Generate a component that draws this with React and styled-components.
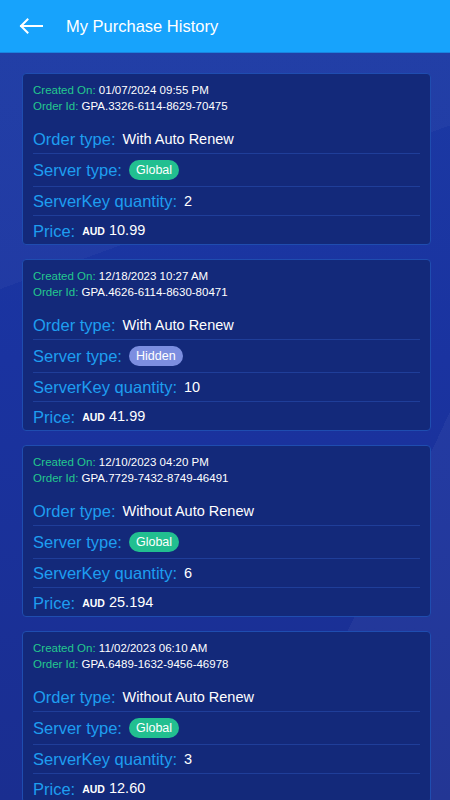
import styled, { createGlobalStyle } from 'styled-components'

const orders = [
  {
    createdOn: '01/07/2024 09:55 PM',
    orderId: 'GPA.3326-6114-8629-70475',
    orderType: 'With Auto Renew',
    server: 'Global',
    quantity: 2,
    price: '10.99',
  },
  {
    createdOn: '12/18/2023 10:27 AM',
    orderId: 'GPA.4626-6114-8630-80471',
    orderType: 'With Auto Renew',
    server: 'Hidden',
    quantity: 10,
    price: '41.99',
  },
  {
    createdOn: '12/10/2023 04:20 PM',
    orderId: 'GPA.7729-7432-8749-46491',
    orderType: 'Without Auto Renew',
    server: 'Global',
    quantity: 6,
    price: '25.194',
  },
  {
    createdOn: '11/02/2023 06:10 AM',
    orderId: 'GPA.6489-1632-9456-46978',
    orderType: 'Without Auto Renew',
    server: 'Global',
    quantity: 3,
    price: '12.60',
  },
]

function BackArrow() {
  return (
    <svg width="24" height="16" viewBox="0 0 24 16" fill="none">
      <path
        d="M23 8H2M8.5 1.5L2 8l6.5 6.5"
        stroke="#fff"
        strokeWidth="2"
        strokeLinecap="square"
      />
    </svg>
  )
}

function OrderCard({ order }) {
  return (
    <Card>
      <Meta>
        <MetaLine>
          <MetaLabel>Created On:</MetaLabel> {order.createdOn}
        </MetaLine>
        <MetaLine>
          <MetaLabel>Order Id:</MetaLabel> {order.orderId}
        </MetaLine>
      </Meta>

      <Row>
        <Label>Order type:</Label>
        <Value>{order.orderType}</Value>
      </Row>
      <Row $tall>
        <Label>Server type:</Label>
        <Badge $kind={order.server}>{order.server}</Badge>
      </Row>
      <Row>
        <Label>ServerKey quantity:</Label>
        <Value>{order.quantity}</Value>
      </Row>
      <Row $last>
        <Label>Price:</Label>
        <Value>
          <Currency>AUD</Currency> {order.price}
        </Value>
      </Row>
    </Card>
  )
}

export default function App() {
  return (
    <>
      <GlobalStyle />
      <Page>
        <TopBar>
          <BackButton>
            <BackArrow />
          </BackButton>
          <Title>My Purchase History</Title>
        </TopBar>
        <List>
          {orders.map((o) => (
            <OrderCard key={o.orderId} order={o} />
          ))}
        </List>
      </Page>
    </>
  )
}

const GlobalStyle = createGlobalStyle`
  html, body {
    margin: 0;
    padding: 0;
    height: 100%;
    overflow: hidden;
  }
  body {
    font-family: "Liberation Sans", Arial, sans-serif;
    background: #1a35a0;
  }
`

const Page = styled.div`
  width: 450px;
  height: 800px;
  overflow: hidden;
  background:
    linear-gradient(115deg, transparent 0 78%, rgba(255, 255, 255, 0.04) 78% 100%),
    linear-gradient(160deg, rgba(255, 255, 255, 0.03) 0 30%, transparent 30% 100%),
    linear-gradient(180deg, #1b3aa4 0%, #1a33a0 45%, #1a2e90 100%);
`

const TopBar = styled.header`
  height: 52px;
  display: flex;
  align-items: center;
  background: #17a3fc;
  border-bottom: 1px solid #1a84e0;
  padding-left: 19px;
`

const BackButton = styled.button`
  border: none;
  background: none;
  padding: 0;
  width: 24px;
  height: 16px;
  display: flex;
  align-items: center;
  cursor: pointer;
`

const Title = styled.h1`
  margin: 0 0 0 23px;
  color: #fff;
  font-size: 16.5px;
  font-weight: 400;
  line-height: 20px;
`

const List = styled.div`
  display: flex;
  flex-direction: column;
  gap: 14px;
  padding: 20px 19px 0 22px;
`

const Card = styled.div`
  background: #13297a;
  border: 1px solid #1f4db0;
  border-radius: 4px;
  padding: 8px 10px 0 10px;
`

const Meta = styled.div`
  margin-bottom: 11px;
`

const MetaLine = styled.div`
  color: #fff;
  font-size: 11.5px;
  line-height: 16px;
`

const MetaLabel = styled.span`
  color: #23c88e;
`

const Row = styled.div`
  display: flex;
  align-items: center;
  gap: 7px;
  padding: ${(p) => (p.$tall ? '6px 0' : p.$last ? '4px 0 3px' : '4px 0')};
  border-bottom: ${(p) => (p.$last ? 'none' : '1px solid #1f3e99')};
`

const Label = styled.span`
  color: #1e9ef0;
  font-size: 16.5px;
  line-height: 20px;
`

const Value = styled.span`
  color: #fff;
  font-size: 14.5px;
  line-height: 20px;
`

const Currency = styled.span`
  font-size: 10.5px;
  font-weight: 700;
`

const Badge = styled.span`
  display: inline-flex;
  align-items: center;
  height: 20px;
  padding: 0 7px;
  border-radius: 10px;
  font-size: 12.5px;
  color: #fff;
  background: ${(p) => (p.$kind === 'Hidden' ? '#7c8ee0' : '#22bf90')};
`
